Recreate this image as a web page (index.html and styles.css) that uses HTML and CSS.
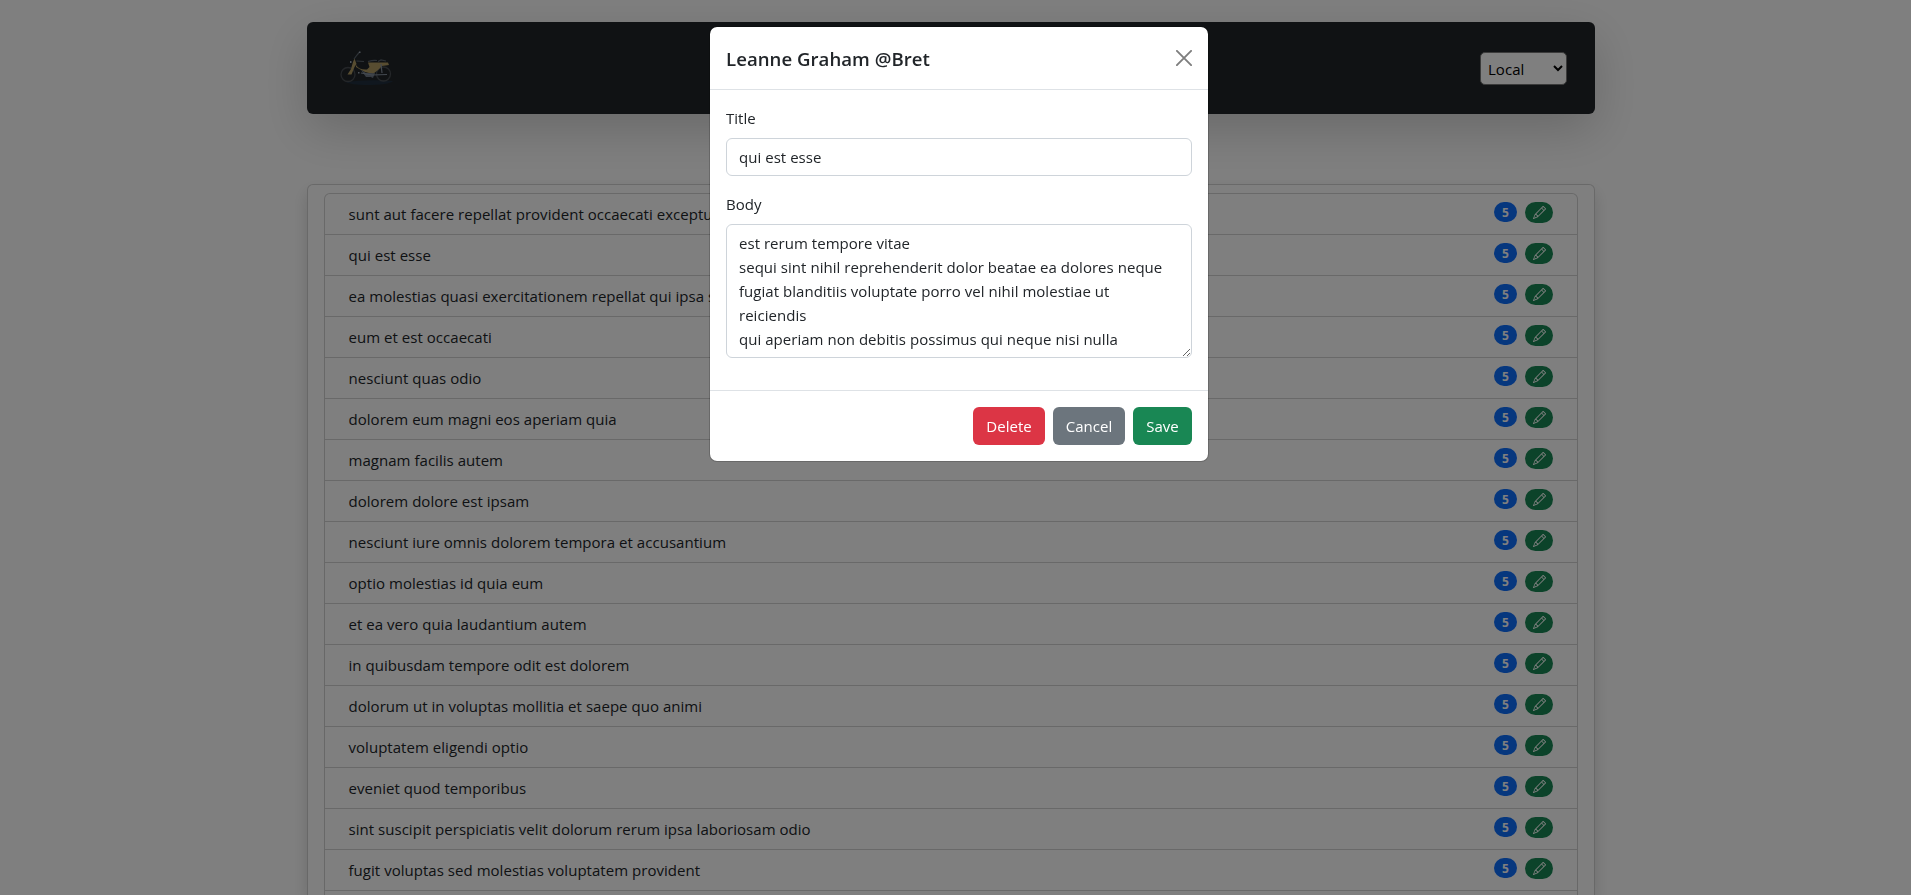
FILE: index.html
```html
<!DOCTYPE html>
<html lang="en">
<head>
<meta charset="utf-8">
<title>Posts</title>
<link rel="stylesheet" href="styles.css">
</head>
<body>
<div class="page">
  <nav class="navbar">
    <svg class="logo" viewBox="0 0 56 36" fill="none" aria-label="Motorbike">
      <path d="M6 32Q30 29 54 31Q50 35 26 35Q14 35 6 32Z" fill="#202f3f"/>
      <g stroke="#484d52" stroke-width="1.3"><circle cx="9" cy="24.5" r="7"/><circle cx="44.500" cy="24" r="7"/></g>
      <path d="M15.500 8.500L17.500 14L15.500 17L12.500 24.500H8.500L12 19L14 12Z" fill="#b09a62"/>
      <path d="M17 15Q20 20 28 19.500L30.500 17L29 12.500H49L50 15L43 16L39 20L34 24L26 22Q20 19 17 17Z" fill="#b09a62"/>
      <path d="M15 9L18 5L20.500 2M17.500 11L25 11.500M29 11.500Q34 10 38 10.500M39 11.500L42 10L47 11" stroke="#5c656e" stroke-width="1.2"/>
      <path d="M22 20L27 23H33L31 27H27ZM25 24L36 23L34 28Z" fill="#707985"/>
      <path d="M22 23L33 25L48 24.500M42 14L43 23" stroke="#8792a0" stroke-width="1.200"/>
      <path d="M20 1.500h1.500v1.500H20zM11 11h1.500v2H11zM19 22h1.500v1.500H19z" fill="#9aa5b2"/>
    </svg>
    <select class="source"><option>Local</option></select>
  </nav>
  <main class="card"><ul class="posts" id="posts"></ul></main>
</div>
<div class="backdrop"></div>
<div class="modal">
  <header class="modal-header">
    <h5 class="modal-title">Leanne Graham @Bret</h5>
    <button class="close" aria-label="Close"><svg viewBox="0 0 16 16" width="16" height="16"><path d="M.9.9 15.1 15.1M15.1.9.9 15.1" stroke="#000" stroke-width="1.9" stroke-linecap="round"/></svg></button>
  </header>
  <div class="modal-body">
    <label class="label" for="title">Title</label>
    <input class="control" id="title" value="qui est esse">
    <label class="label" for="body">Body</label>
    <textarea class="control area" id="body" rows="5">est rerum tempore vitae
sequi sint nihil reprehenderit dolor beatae ea dolores neque
fugiat blanditiis voluptate porro vel nihil molestiae ut
reiciendis
qui aperiam non debitis possimus qui neque nisi nulla</textarea>
  </div>
  <footer class="modal-footer">
    <button class="btn danger">Delete</button>
    <button class="btn secondary">Cancel</button>
    <button class="btn success">Save</button>
  </footer>
</div>
<script src="app.js"></script>
</body>
</html>
```

FILE: styles.css
```css
* { box-sizing: border-box; }
html, body { height: 100%; overflow: hidden; }
body { margin: 0; background: #fff; color: #212529; font: 15px/24px "Open Sans", "Noto Sans", sans-serif; letter-spacing: .035px; }
button, input, select, textarea { font: inherit; color: inherit; letter-spacing: inherit; margin: 0; }
.page { display: flex; flex-direction: column; width: 1288px; height: 100%; margin-left: 307px; padding-top: 22px; }
.navbar { display: flex; flex: none; align-items: center; justify-content: space-between; height: 92px; padding: 0 28px 0 32px; background: #212529; border-radius: 6px; box-shadow: 0 16px 48px rgba(0,0,0,.175); }
.logo { width: 56px; height: 36px; }
.source { width: 87px; height: 33px; padding: 1px 0 0 3px; background: #fff; border: 1px solid #767676; border-radius: 5px; color: #000; }
.card { flex: 1; margin-top: 70px; padding: 8px 16px 0; border: 1px solid rgba(0,0,0,.175); border-bottom: 0; border-radius: 6px 6px 0 0; box-shadow: 0 8px 16px rgba(0,0,0,.15); }
.posts { height: 100%; margin: 0; padding: 0; list-style: none; border: 1px solid rgba(0,0,0,.175); border-bottom: 0; border-radius: 6px 6px 0 0; }
.post { display: flex; align-items: flex-start; gap: 8px; height: 41px; padding: 8px 24px; border-bottom: 1px solid rgba(0,0,0,.175); }
.post-title { flex: 1; margin-left: -.5px; }
.count { width: 23px; height: 20px; border-radius: 10px; background: #0d6efd; color: #fff; font-size: 12px; font-weight: 700; line-height: 21px; text-align: center; }
.edit { display: flex; align-items: center; justify-content: center; width: 28px; height: 21px; border-radius: 11px; background: #198754; color: #fff; }
.backdrop { position: fixed; inset: 0; background: rgba(0,0,0,.5); }
.modal { position: fixed; top: 26px; left: 709px; width: 500px; background: #fff; background-clip: padding-box; border: 1px solid rgba(0,0,0,.175); border-radius: 8px; }
.modal-header { display: flex; align-items: center; justify-content: space-between; padding: 16px; height: 63px; border-bottom: 1px solid #dee2e6; }
.modal-title { margin: 2px 0 0; font-size: 18.6px; line-height: 30px; font-weight: 600; }
.close { display: flex; padding: 0; border: 0; background: none; opacity: .5; }
.modal-body { padding: 16px; }
.label { display: block; margin-bottom: 8px; }
.control { display: block; width: 100%; height: 38px; margin-bottom: 16px; padding: 6px 12px; border: 1px solid #ced4da; border-radius: 6px; background: #fff; outline: 0; }
.area { height: 134px; overflow: hidden; resize: vertical; }
.modal-footer { display: flex; justify-content: flex-end; gap: 8px; padding: 16px; border-top: 1px solid #dee2e6; }
.btn { width: 72px; height: 38px; padding: 0; border: 0; border-radius: 6px; color: #fff; }
.danger { background: #dc3545; }
.secondary { background: #6c757d; }
.success { width: 59px; background: #198754; }
```

FILE: app.js
```js
const titles = [
  "sunt aut facere repellat provident occaecati exceptu",
  "qui est esse",
  "ea molestias quasi exercitationem repellat qui ipsa s",
  "eum et est occaecati",
  "nesciunt quas odio",
  "dolorem eum magni eos aperiam quia",
  "magnam facilis autem",
  "dolorem dolore est ipsam",
  "nesciunt iure omnis dolorem tempora et accusantium",
  "optio molestias id quia eum",
  "et ea vero quia laudantium autem",
  "in quibusdam tempore odit est dolorem",
  "dolorum ut in voluptas mollitia et saepe quo animi",
  "voluptatem eligendi optio",
  "eveniet quod temporibus",
  "sint suscipit perspiciatis velit dolorum rerum ipsa laboriosam odio",
  "fugit voluptas sed molestias voluptatem provident"
];
const pencil = '<svg width="13" height="13" viewBox="0 0 16 16" fill="currentColor"><path d="M12.146.146a.5.5 0 0 1 .708 0l3 3a.5.5 0 0 1 0 .708l-10 10a.5.5 0 0 1-.168.11l-5 2a.5.5 0 0 1-.65-.65l2-5a.5.5 0 0 1 .11-.168l10-10zM11.207 2.5 13.5 4.793 14.793 3.5 12.5 1.207 11.207 2.5zm1.586 3L10.5 3.207 4 9.707V10h.5a.5.5 0 0 1 .5.5v.5h.5a.5.5 0 0 1 .5.5v.5h.293l6.5-6.5zm-9.761 5.175-.106.106-1.528 3.821 3.821-1.528.106-.106A.5.5 0 0 1 5 12.5V12h-.5a.5.5 0 0 1-.5-.5V11h-.5a.5.5 0 0 1-.468-.325z"/></svg>';
document.getElementById("posts").innerHTML = titles.map(t =>
  `<li class="post"><span class="post-title">${t}</span><span class="count">5</span><span class="edit">${pencil}</span></li>`
).join("");
```
